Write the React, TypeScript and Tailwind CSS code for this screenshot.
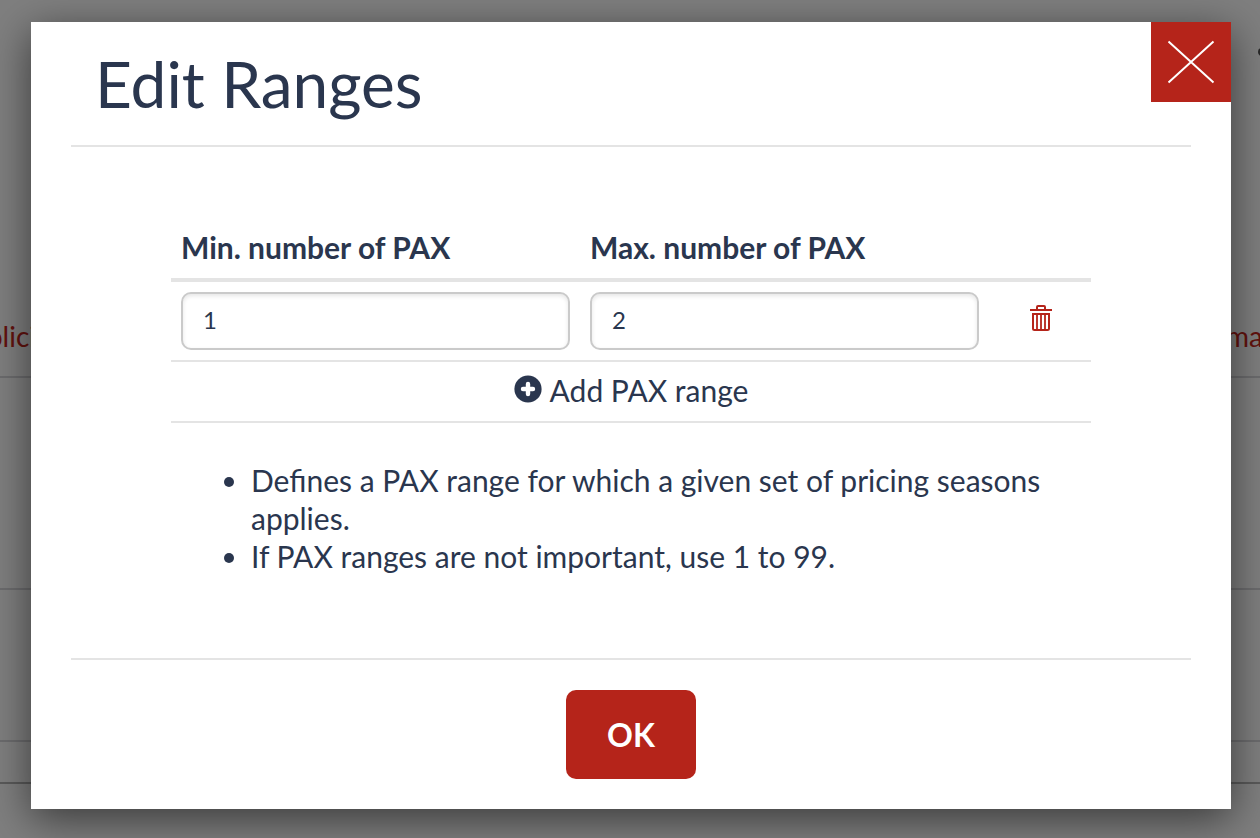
const lines = "border-[#d8d8dc]";

function PageBehind() {
  return (
    <div aria-hidden="true" className="flex h-full flex-col overflow-hidden bg-white text-[28px] leading-[40px] text-[#c5241a]">
      <div className="flex h-[316px] shrink-0 justify-end pt-12">
        <span className="-mr-1.5 size-2 rounded-full bg-[#505050]" />
      </div>
      <div className={`flex h-[62px] shrink-0 justify-between border-b-2 ${lines}`}>
        <span className="flex w-9 justify-end">olici</span>
        <span className="w-[34px]">ma</span>
      </div>
      <div className={`h-[212px] shrink-0 border-b-2 ${lines}`} />
      <div className={`h-[152px] shrink-0 border-b-2 ${lines}`} />
      <div className="h-[42px] shrink-0 border-b-2 border-[#b4b4b4]" />
    </div>
  );
}

function TrashIcon() {
  return (
    <svg viewBox="0 0 22 26" className="h-[26px] w-[22px]" fill="none" stroke="currentColor" aria-hidden="true">
      <path d="M0 5h22" strokeWidth="2" />
      <path d="M7 5V2q0-1 1-1h6q1 0 1 1v3" strokeWidth="2" />
      <path d="M3 9h16v14.500q0 1.500-1.500 1.500h-13q-1.500 0-1.500-1.500z" strokeWidth="2" />
      <path d="M7 9v16M11 9v16M15 9v16" strokeWidth="1.800" />
    </svg>
  );
}

function PlusIcon() {
  return (
    <svg viewBox="0 0 28 28" className="size-7" aria-hidden="true">
      <circle cx="14" cy="14" r="13.600" fill="currentColor" />
      <path d="M14 9v10M9 14h10" stroke="#fff" strokeWidth="4.400" strokeLinecap="round" />
    </svg>
  );
}

const inputClass =
  "block h-[58px] w-full rounded-[10px] border-2 border-[#cacaca] bg-white px-5 pb-1 text-[24px] text-[#2a364e] shadow-[inset_0_2px_4px_rgba(10,10,10,0.1)] outline-none";

export default function App() {
  return (
    <div className="relative h-screen overflow-hidden font-['Lato','Open_Sans',sans-serif] text-[#2a364e]">
      <PageBehind />
      <div className="absolute inset-0 bg-black/50 pt-[22px] pr-[29px] pl-[31px]">
        <div role="dialog" aria-modal="true" aria-labelledby="title" className="bg-white px-10 pb-[30px] shadow-[0_10px_40px_rgba(0,0,0,0.55)]">
          <header className="-mr-10 flex items-start justify-between">
            <h1 id="title" className="flex h-[123px] items-center pl-6 text-[64px] leading-[84px]">Edit Ranges</h1>
            <button type="button" aria-label="Close" className="grid size-20 place-items-center bg-[#b5241a] text-white">
              <svg viewBox="0 0 48 44" className="h-11 w-12" fill="none" stroke="currentColor" strokeWidth="2" aria-hidden="true">
                <path d="M1.500 1.500L46.500 42.500M46.500 1.500L1.500 42.500" />
              </svg>
            </button>
          </header>
          <main className="border-y-2 border-[#e4e4e4] px-[100px] pt-[72px] pb-[83px] text-[30px] leading-[38px]">
            <table className="w-full table-fixed border-collapse">
              <thead>
                <tr className="border-b-4 border-[#e4e4e4] text-left">
                  <th id="min" className="h-[61px] px-[10px] pb-1 font-bold">Min. number of PAX</th>
                  <th id="max" className="px-[10px] pb-1 font-bold">Max. number of PAX</th>
                  <th className="w-[102px]" />
                </tr>
              </thead>
              <tbody>
                <tr className="border-b-2 border-[#e4e4e4]">
                  <td className="p-[10px]"><input aria-labelledby="min" defaultValue="1" className={inputClass} /></td>
                  <td className="p-[10px]"><input aria-labelledby="max" defaultValue="2" className={inputClass} /></td>
                  <td className="pb-1.5">
                    <button type="button" aria-label="Delete range" className="mx-auto block w-5 text-[#b5241a]"><TrashIcon /></button>
                  </td>
                </tr>
                <tr className="border-b-2 border-[#e4e4e4]">
                  <td colSpan={3} className="h-[61px] pb-1">
                    <button type="button" className="mx-auto flex items-start gap-2"><span className="pt-1"><PlusIcon /></span>Add PAX range</button>
                  </td>
                </tr>
              </tbody>
            </table>
            <ul className="mt-[38px] list-disc pr-10 pl-20">
              <li>Defines a PAX range for which a given set of pricing seasons applies.</li>
              <li>If PAX ranges are not important, use 1 to 99.</li>
            </ul>
          </main>
          <footer className="flex justify-center pt-[30px]">
            <button type="button" className="h-[89px] w-[130px] rounded-[10px] bg-[#b5241a] text-[32px] font-bold text-white">OK</button>
          </footer>
        </div>
      </div>
    </div>
  );
}
